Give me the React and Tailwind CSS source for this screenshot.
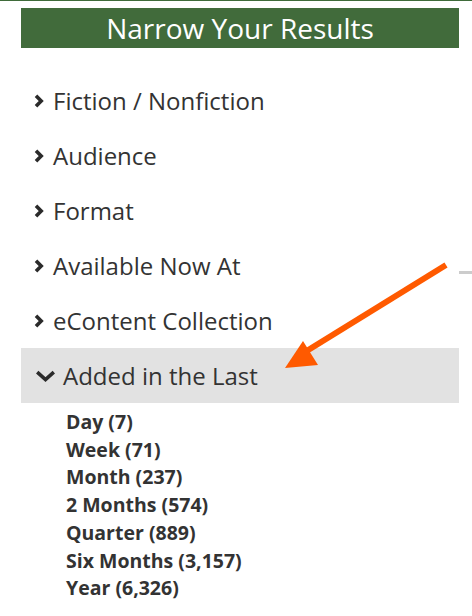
import React from 'react';

const facets = [
  "Fiction / Nonfiction",
  "Audience",
  "Format",
  "Available Now At",
  "eContent Collection",
];

const ranges = [
  "Day (7)",
  "Week (71)",
  "Month (237)",
  "2 Months (574)",
  "Quarter (889)",
  "Six Months (3,157)",
  "Year (6,326)",
];

const ChevronRight = () => (
  <svg width="10" height="14" viewBox="0 0 10 14" className="shrink-0">
    <path d="M2 1.8 L7.2 7 L2 12.2" fill="none" stroke="#2b2b2b" strokeWidth="3.6" />
  </svg>
);

const ChevronDown = () => (
  <svg width="21" height="12" viewBox="0 0 21 12" className="shrink-0">
    <path d="M2.2 2.2 L10.5 9.5 L18.8 2.2" fill="none" stroke="#2b2b2b" strokeWidth="3.6" />
  </svg>
);

export default function App() {
  return (
    <div className="relative w-[472px] h-[616px] bg-white overflow-hidden" style={{ fontFamily: '"Open Sans", sans-serif' }}>
      {/* top rule */}
      <div className="h-px bg-[#3f6b3a]" />

      <div className="ml-[21px] w-[438px] mt-[7px]">
        {/* Header */}
        <div className="h-[40px] bg-[#416b3b] flex items-center justify-center">
          <h2 className="text-white text-[28px] leading-none">Narrow Your Results</h2>
        </div>

        {/* Facets */}
        <div className="mt-[25px]">
          {facets.map((f) => (
            <div key={f} className="h-[55px] flex items-center gap-[9px] pl-[13px] text-[#333] text-[24px]">
              <ChevronRight />
              <span>{f}</span>
            </div>
          ))}
          <div className="h-[55px] flex items-center gap-[7px] pl-[14px] bg-[#e2e2e2] text-[#333] text-[24px]">
            <ChevronDown />
            <span>Added in the Last</span>
          </div>
          <ul className="pl-[45px] pt-[5px]">
            {ranges.map((r) => (
              <li key={r} className="text-[19.5px] leading-[27.7px] font-bold text-[#333]">
                {r}
              </li>
            ))}
          </ul>
        </div>
      </div>

      {/* gray dash on the right edge */}
      <div className="absolute left-[459px] top-[271px] w-[13px] h-[3px] bg-[#cccccc]" />

      {/* annotation arrow */}
      <svg className="absolute left-0 top-0" width="472" height="616" viewBox="0 0 472 616">
        <line x1="446" y1="265" x2="305" y2="352" stroke="#ff5a00" strokeWidth="6" />
        <polygon points="285,368 303,341 318,365" fill="#ff5a00" />
      </svg>
    </div>
  );
}
